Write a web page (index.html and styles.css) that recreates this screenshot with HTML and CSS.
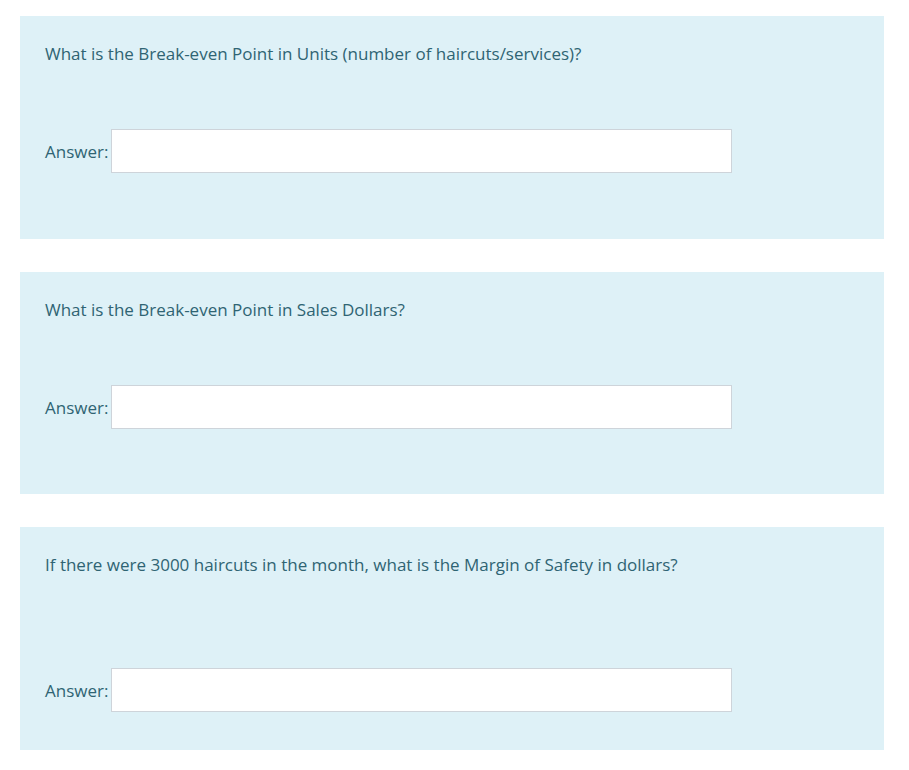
FILE: index.html
```html
<!DOCTYPE html>
<html>
<head>
<meta charset="utf-8">
<link rel="stylesheet" href="styles.css">
</head>
<body>
<div class="page">
  <div class="que">
    <p class="qtext">What is the Break-even Point in Units (number of haircuts/services)?</p>
    <div class="ablock">
      <label class="lbl">Answer:</label>
      <input class="ans" type="text">
    </div>
  </div>
  <div class="que">
    <p class="qtext">What is the Break-even Point in Sales Dollars?</p>
    <div class="ablock">
      <label class="lbl">Answer:</label>
      <input class="ans" type="text">
    </div>
  </div>
  <div class="que">
    <p class="qtext">If there were 3000 haircuts in the month, what is the Margin of Safety in dollars?</p>
    <div class="ablock low">
      <label class="lbl">Answer:</label>
      <input class="ans" type="text">
    </div>
  </div>
</div>
</body>
</html>
```
FILE: styles.css
```css
html, body {
  margin: 0;
  padding: 0;
  background: #ffffff;
}
body {
  font-family: "Open Sans", sans-serif;
  font-size: 17px;
  color: #2f6473;
}
.page {
  padding: 16px 25px 0 20px;
  display: flex;
  flex-direction: column;
  gap: 33px;
}
.que {
  background: #def1f7;
  height: 222.5px;
  box-sizing: border-box;
  padding: 27px 25px;
}
.qtext {
  margin: 0;
  line-height: 22px;
}
.ablock {
  margin-top: 64px;
  display: flex;
  align-items: center;
  gap: 3px;
}
.ablock.low {
  margin-top: 92px;
}
.lbl {
  line-height: 22px;
  padding-top: 2px;
}
.ans {
  width: 621px;
  height: 44px;
  box-sizing: border-box;
  border: 1px solid #ced4da;
  background: #fff;
  margin: 0;
  padding: 0 10px;
  font: inherit;
}
```
